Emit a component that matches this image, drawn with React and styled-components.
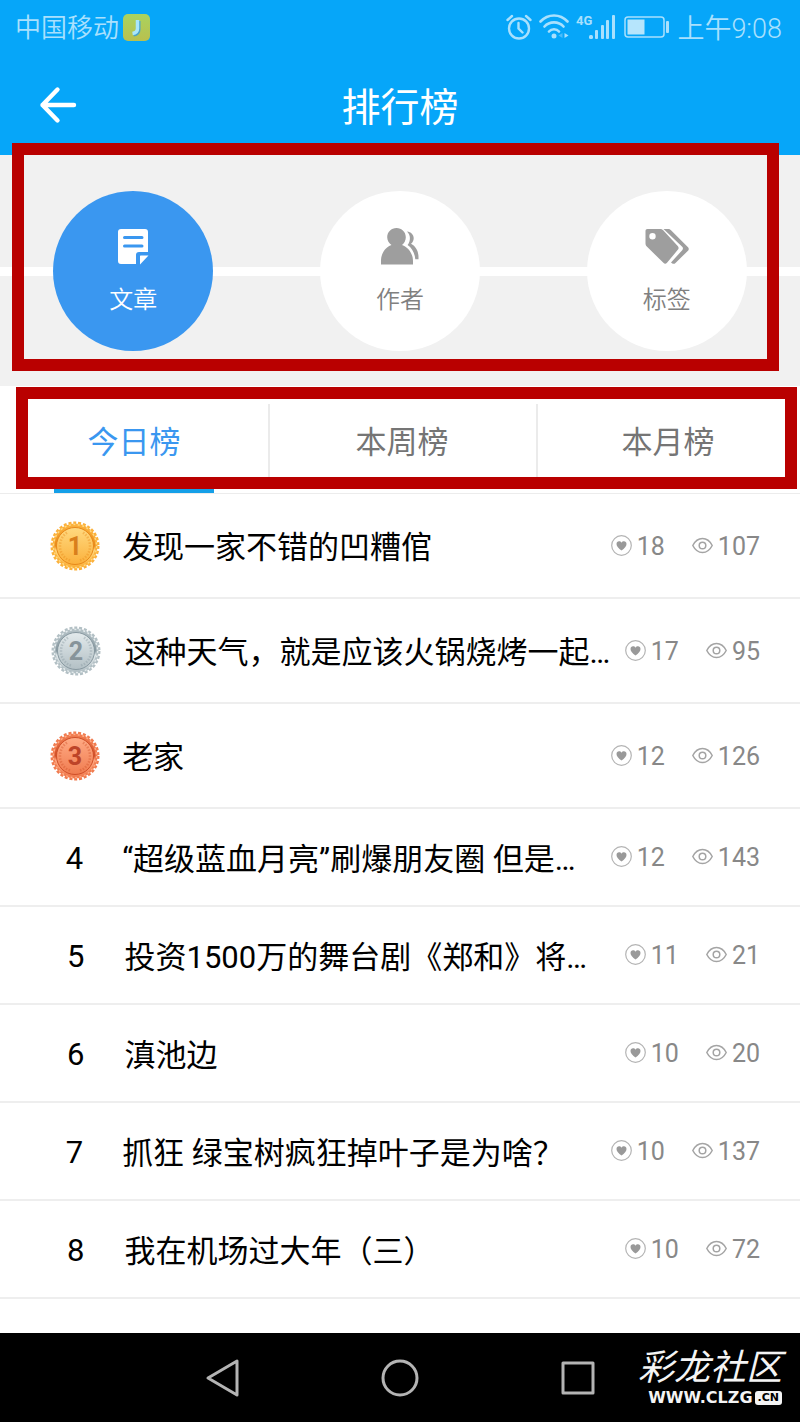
import React, { useState } from 'react';
import styled, { createGlobalStyle } from 'styled-components';

const GlobalStyle = createGlobalStyle`
  * {
    box-sizing: border-box;
  }
  body {
    margin: 0;
    background: #ffffff;
    font-family: Roboto, "Noto Sans CJK SC", sans-serif;
  }
  button {
    margin: 0;
    padding: 0;
    border: none;
    background: none;
    font-family: inherit;
    cursor: pointer;
  }
  svg {
    display: block;
    flex: none;
  }
`;

const Page = styled.div`
  display: flex;
  flex-direction: column;
  min-height: 100vh;
`;

const Header = styled.header`
  background: #06a6f9;
  color: #ffffff;
`;

const StatusBar = styled.div`
  display: flex;
  justify-content: space-between;
  align-items: center;
  height: 55px;
  padding: 0 18px 0 15px;
  color: #a9e0fd;
  font-size: 26px;
  font-weight: 350;
  line-height: 40px;
`;

const StatusGroup = styled.div`
  display: flex;
  align-items: center;
  gap: ${props => props.$gap || 4}px;
`;

const Clock = styled.time`
  padding-top: 2px;
  font-size: 27px;
`;

const TitleBar = styled.div`
  display: grid;
  grid-template-columns: 80px 1fr 80px;
  align-items: center;
  height: 100px;
`;

const BackButton = styled.button`
  justify-self: end;
  padding: 0 3px 0 0;
  color: #ffffff;
`;

const Title = styled.h1`
  margin: 0;
  padding-top: 6px;
  font-size: 39px;
  font-weight: 400;
  line-height: 56px;
  text-align: center;
`;

const Categories = styled.nav`
  position: relative;
  display: grid;
  grid-template-columns: repeat(3, 1fr);
  justify-items: center;
  padding: 36px 0 35px;
  background: linear-gradient(#ffffff, #ffffff) 0 112px / 100% 9px no-repeat #f1f1f1;
`;

const CategoryButton = styled.button`
  display: flex;
  flex-direction: column;
  align-items: center;
  gap: 17px;
  width: 160px;
  height: 160px;
  padding-top: 37px;
  border-radius: 50%;
  background: ${props => (props.$active ? '#3a97f0' : '#ffffff')};
  color: ${props => (props.$active ? '#ffffff' : '#808080')};
  font-size: 24px;
  font-weight: 350;
  line-height: 36px;
`;

const Tabs = styled.nav`
  position: relative;
  display: grid;
  grid-template-columns: 268fr 268fr 264fr;
  border-bottom: 1px solid #ececec;
`;

const TabButton = styled.button`
  display: flex;
  flex-direction: column;
  align-items: center;
  justify-content: space-between;
  height: 107px;
  padding-top: 36px;
  color: ${props => (props.$active ? '#3a97f0' : '#757575')};
  font-size: 31px;
  line-height: 42px;
  background: linear-gradient(#ebebeb, #ebebeb) 0 18px / 2px 80px no-repeat;
  &:first-of-type {
    background: none;
  }
  &::after {
    content: '';
    width: 160px;
    height: 8px;
    background: ${props => (props.$active ? '#159fe8' : 'transparent')};
  }
`;

// 红色标注框，浮在内容上面
const Mark = styled.div`
  position: absolute;
  inset: ${props => props.$inset};
  border: 12px solid #b90000;
  pointer-events: none;
`;

const List = styled.ol`
  flex: 1;
  margin: 0;
  padding: 0;
  list-style: none;
`;

const Row = styled.li`
  border-bottom: 2px solid #eeeeee;
`;

const RowLink = styled.a`
  display: flex;
  align-items: center;
  height: ${props => (props.$medal ? 103 : 96)}px;
  padding: 0 40px 0 27px;
  color: #000000;
  font-size: 31px;
  line-height: 44px;
  text-decoration: none;
`;

const Rank = styled.span`
  flex: 1 1 0;
  display: flex;
  justify-content: center;
  padding-top: ${props => (props.$medal ? 0 : 4)}px;
`;

const RowTitle = styled.span`
  flex: 5 1 0;
  min-width: 0;
  padding-top: 5px;
  overflow: hidden;
  white-space: nowrap;
  text-overflow: ellipsis;
`;

const Stats = styled.span`
  display: flex;
  gap: 27px;
  margin-left: 13px;
`;

const Stat = styled.span`
  display: flex;
  align-items: center;
  gap: 5px;
  padding-top: 2px;
  color: #888888;
  font-size: 25px;
  line-height: 32px;
  svg {
    margin-bottom: 3px;
  }
`;

const BottomBar = styled.footer`
  position: relative;
  display: grid;
  grid-template-columns: repeat(3, 178px);
  justify-content: center;
  align-items: center;
  height: 89px;
  background: #000000;
`;

const NavButton = styled.button`
  justify-self: center;
`;

const Watermark = styled.div`
  position: absolute;
  right: 18px;
  bottom: 16px;
  display: flex;
  flex-direction: column;
  align-items: flex-end;
  gap: 2px;
  color: #f4f4f4;
  font-size: 36px;
  font-style: italic;
  font-weight: 400;
  line-height: 40px;
`;

const WatermarkUrl = styled.div`
  display: flex;
  align-items: center;
  gap: 2px;
  font: bold 16px/16px "DejaVu Sans", sans-serif;
`;

const WatermarkBadge = styled.span`
  padding: 0 3px;
  border-radius: 3px;
  background: #f4f4f4;
  color: #000000;
  font-size: 11px;
  line-height: 14px;
`;

function CardIcon() {
  return (
    <svg width="27" height="27" viewBox="0 0 27 27">
      <defs>
        <linearGradient id="card" x1="0" y1="0" x2="0" y2="1">
          <stop offset="0" stopColor="#a9d35f" />
          <stop offset="1" stopColor="#b9c04e" />
        </linearGradient>
      </defs>
      <rect width="27" height="27" rx="5" fill="url(#card)" />
      <path d="M15.5 7v8.500c0 3-1.500 4.500-5 5" fill="none" stroke="#4aa3c8" strokeWidth="4" />
      <path d="M14.5 6v8.500c0 3-1.500 4.500-5 5" fill="none" stroke="#a9e6fb" strokeWidth="3.5" />
    </svg>
  );
}

function AlarmIcon() {
  return (
    <svg width="26" height="28" viewBox="0 0 26 28" fill="none" stroke="currentColor" strokeWidth="2.4" strokeLinecap="round">
      <circle cx="13" cy="14.5" r="10" />
      <path d="M12.5 9V14.500l4 4M1.500 6 6 2M24.500 6 20 2" />
    </svg>
  );
}

function WifiIcon() {
  return (
    <svg width="30" height="28" viewBox="0 0 30 28" fill="none" stroke="currentColor" strokeWidth="2.6" strokeLinecap="round">
      <path d="M1.500 7.500C9-.5 21-.5 28.500 7.500M5.500 12.500c5-5.500 14-5.500 19 0M10 17.500c2.500-3 7.500-3 10 0" />
      <circle cx="15" cy="22" r="2.5" fill="currentColor" stroke="none" />
      <path d="M25.500 19v5l4-2.500z" fill="currentColor" stroke="none" />
      <path d="M23.500 19v5l-4-2.500z" fill="#4dbcfa" stroke="none" />
    </svg>
  );
}

function SignalIcon() {
  return (
    <svg width="41" height="32" viewBox="0 0 41 32" fill="currentColor">
      <text x="0" y="13" fontSize="13" fontWeight="700">4G</text>
      <rect x="13" y="23" width="4" height="4" rx="1.5" />
      <rect x="19" y="18" width="3" height="9" rx="1" />
      <rect x="25" y="13" width="3" height="14" rx="1" />
      <rect x="30" y="8" width="3" height="19" rx="1" />
      <rect x="36" y="3" width="3" height="24" rx="1" />
    </svg>
  );
}

function BatteryIcon() {
  return (
    <svg width="46" height="24" viewBox="0 0 46 24" fill="none" stroke="currentColor">
      <rect x="1" y="1" width="39" height="20" rx="3" strokeWidth="1.5" />
      <rect x="3.5" y="3.5" width="17" height="15" fill="#b6e5fc" stroke="none" />
      <rect x="42" y="5" width="3" height="12" rx="1" fill="currentColor" stroke="none" />
    </svg>
  );
}

function BackIcon() {
  return (
    <svg width="38" height="38" viewBox="0 0 38 38" fill="none" stroke="currentColor" strokeWidth="4.4" strokeLinecap="round" strokeLinejoin="round">
      <path d="M18.500 3.500 3.500 19 18.500 34.500M3.500 19H35" />
    </svg>
  );
}

function NoteIcon() {
  return (
    <svg width="44" height="37" viewBox="0 0 44 37" fill="#ffffff">
      <path d="M10 1h24a3 3 0 0 1 3 3v20H28a3 3 0 0 0-3 3v9H10a3 3 0 0 1-3-3V4a3 3 0 0 1 3-3z" />
      <path d="M29.500 27.500h8l-8.500 9V28z" />
      <path d="M13.500 9.500h17.500M13.500 18h17.500" stroke="#3a97f0" strokeWidth="3" strokeLinecap="round" />
    </svg>
  );
}

function AuthorIcon() {
  return (
    <svg width="40" height="37" viewBox="0 0 40 37" fill="#9e9e9e">
      <path d="M16.500 0C21.700 0 25.800 4 25.800 9.300c0 3.200-1.500 6-3.800 7.700C28.500 19.500 33 25.500 33 33v3.500H1V33C1 25.500 5 19.500 11.500 17 9 15.300 7.200 12.500 7.200 9.300 7.200 4 11.300 0 16.500 0z" />
      <path d="M27 3.500c4 .3 6.700 3.200 6.700 6.800 0 2.200-1 4.200-2.700 5.500 4.700 2.300 7.500 7.500 7.500 13.200v2.200h-3.200C34.800 25.200 32 20 27.600 17c1.600-2 2.300-4.300 2.300-7 0-2.300-1-4.700-2.900-6.500z" />
    </svg>
  );
}

function TagIcon() {
  return (
    <svg width="44" height="37" viewBox="0 0 44 37" fill="#9e9e9e">
      <path fillRule="evenodd" d="M2.500 1h12.500c1.300 0 2.300.4 3.200 1.300l14.500 15.700c1.200 1.200 1.200 2.600.1 3.800L22 34.800c-1.200 1.300-2.400 1.300-3.600 0L1.800 18.500C.8 17.500.5 16.500.5 15.300V3c0-1.300.7-2 2-2zm5 4a3.200 3.200 0 1 0 0 6.400 3.200 3.200 0 0 0 0-6.400z" />
      <path d="M18.500 1h4.500c1.300 0 2.200.4 3 1.200l17 17c1 1.100 1 2.400 0 3.500L30.500 35c-1 1-2.500 1.200-3.500.2l-1-.7 11.200-12.300c1-1.100 1-2.300 0-3.400z" />
    </svg>
  );
}

function HeartIcon() {
  return (
    <svg width="21" height="21" viewBox="0 0 21 21">
      <circle cx="10.5" cy="10.5" r="9.8" fill="none" stroke="#b4b4b4" strokeWidth="1.2" />
      <path d="M10.500 15.500C7.500 13.300 5.500 11.300 5.500 9c0-1.600 1.100-2.700 2.500-2.700 1 0 2 .5 2.500 1.400.5-.9 1.500-1.400 2.500-1.400 1.400 0 2.500 1.100 2.500 2.700 0 2.300-2 4.300-5 6.500z" fill="#999999" />
    </svg>
  );
}

function EyeIcon() {
  return (
    <svg width="21" height="21" viewBox="0 0 21 21" fill="none" stroke="#a4a4a4" strokeWidth="1.5">
      <path d="M.8 10.500C5.500 1.200 15.500 1.200 20.200 10.500 15.500 19.800 5.500 19.800.8 10.500z" />
      <circle cx="10.5" cy="10.5" r="3.3" />
    </svg>
  );
}

const medalColors = {
  1: { light: '#ffd980', mid: '#fbb13c', dark: '#e8891a', ink: '#d97f1c' },
  2: { light: '#e3eaec', mid: '#b3c0c5', dark: '#8798a0', ink: '#87949a' },
  3: { light: '#ffab85', mid: '#f07c50', dark: '#d04f28', ink: '#bd4428' }
};

function Medal({ rank }) {
  const { light, mid, dark, ink } = medalColors[rank];
  const id = `medal${rank}`;

  return (
    <svg width="50" height="50" viewBox="0 0 50 50">
      <defs>
        <linearGradient id={`${id}face`} x1="0" y1="0" x2="0" y2="1">
          <stop offset="0" stopColor={light} />
          <stop offset="1" stopColor={mid} />
        </linearGradient>
        <linearGradient id={`${id}rim`} x1="0" y1="0" x2="0" y2="1">
          <stop offset="0" stopColor={mid} />
          <stop offset="0.5" stopColor={dark} />
          <stop offset="0.6" stopColor={light} />
          <stop offset="1" stopColor={mid} />
        </linearGradient>
      </defs>
      <circle cx="25" cy="25" r="22.5" fill={mid} />
      <circle cx="25" cy="25" r="23" fill="none" stroke={mid} strokeWidth="3" strokeDasharray="3 1.816" />
      <circle cx="25" cy="25" r="21.5" fill="none" stroke={light} strokeWidth="1.5" strokeDasharray="2 2.5" />
      <circle cx="25" cy="25" r="20.5" fill={`url(#${id}rim)`} />
      <circle cx="25" cy="25" r="18.5" fill={`url(#${id}face)`} stroke={dark} strokeWidth="1" />
      <path d="M20 39.500C7 35 7 17 18 11M30 39.500C43 35 43 17 32 11" fill="none" stroke={dark} strokeOpacity="0.4" strokeWidth="2.5" strokeDasharray="1.5 1.5" />
      <text x="25" y="34" fontSize="25" fontWeight="700" textAnchor="middle" fill={ink}>{rank}</text>
    </svg>
  );
}

function NavBackIcon() {
  return (
    <svg width="38" height="40" viewBox="0 0 38 40" fill="none" stroke="#b4b4b4" strokeWidth="3" strokeLinejoin="round">
      <path d="M34 3v34L5 20z" />
    </svg>
  );
}

function NavHomeIcon() {
  return (
    <svg width="38" height="38" viewBox="0 0 38 38" fill="none" stroke="#b4b4b4" strokeWidth="3">
      <circle cx="19" cy="19" r="17" />
    </svg>
  );
}

function NavRecentIcon() {
  return (
    <svg width="34" height="34" viewBox="0 0 34 34" fill="none" stroke="#b4b4b4" strokeWidth="3" strokeLinejoin="round">
      <rect x="2" y="2" width="30" height="30" />
    </svg>
  );
}

const categories = [
  { id: 'article', label: '文章', icon: <NoteIcon /> },
  { id: 'author', label: '作者', icon: <AuthorIcon /> },
  { id: 'tag', label: '标签', icon: <TagIcon /> }
];

const tabs = ['今日榜', '本周榜', '本月榜'];

const articles = [
  { title: '发现一家不错的凹糟倌', likes: 18, views: 107 },
  { title: '这种天气，就是应该火锅烧烤一起…', likes: 17, views: 95 },
  { title: '老家', likes: 12, views: 126 },
  { title: '“超级蓝血月亮”刷爆朋友圈 但是…', likes: 12, views: 143 },
  { title: '投资1500万的舞台剧《郑和》将…', likes: 11, views: 21 },
  { title: '滇池边', likes: 10, views: 20 },
  { title: '抓狂 绿宝树疯狂掉叶子是为啥？', likes: 10, views: 137 },
  { title: '我在机场过大年（三）', likes: 10, views: 72 }
];

function ArticleRow({ article, rank }) {
  const hasMedal = rank <= 3;

  return (
    <Row>
      <RowLink href="#" $medal={hasMedal}>
        <Rank $medal={hasMedal}>{hasMedal ? <Medal rank={rank} /> : rank}</Rank>
        <RowTitle>{article.title}</RowTitle>
        <Stats>
          <Stat><HeartIcon />{article.likes}</Stat>
          <Stat><EyeIcon />{article.views}</Stat>
        </Stats>
      </RowLink>
    </Row>
  );
}

function App() {
  const [category, setCategory] = useState('article');
  const [tab, setTab] = useState(tabs[0]);

  return (
    <Page lang="zh-CN">
      <GlobalStyle />
      <Header>
        <StatusBar>
          <StatusGroup>中国移动<CardIcon /></StatusGroup>
          <StatusGroup $gap={7}>
            <AlarmIcon />
            <WifiIcon />
            <SignalIcon />
            <BatteryIcon />
            <Clock>上午9:08</Clock>
          </StatusGroup>
        </StatusBar>
        <TitleBar>
          <BackButton aria-label="返回"><BackIcon /></BackButton>
          <Title>排行榜</Title>
        </TitleBar>
      </Header>
      <Categories>
        {categories.map(item => (
          <CategoryButton key={item.id} $active={item.id === category} onClick={() => setCategory(item.id)}>
            {item.icon}
            {item.label}
          </CategoryButton>
        ))}
        <Mark $inset="-12px 21px 15px 12px" />
      </Categories>
      <Tabs>
        {tabs.map(name => (
          <TabButton key={name} $active={name === tab} onClick={() => setTab(name)}>{name}</TabButton>
        ))}
        <Mark $inset="1px 3px 4px 16px" />
      </Tabs>
      <List>
        {articles.map((article, i) => (
          <ArticleRow key={article.title} article={article} rank={i + 1} />
        ))}
      </List>
      <BottomBar>
        <NavButton aria-label="后退"><NavBackIcon /></NavButton>
        <NavButton aria-label="主页"><NavHomeIcon /></NavButton>
        <NavButton aria-label="最近任务"><NavRecentIcon /></NavButton>
        <Watermark>
          彩龙社区
          <WatermarkUrl>WWW.CLZG<WatermarkBadge>.CN</WatermarkBadge></WatermarkUrl>
        </Watermark>
      </BottomBar>
    </Page>
  );
}

export default App;
